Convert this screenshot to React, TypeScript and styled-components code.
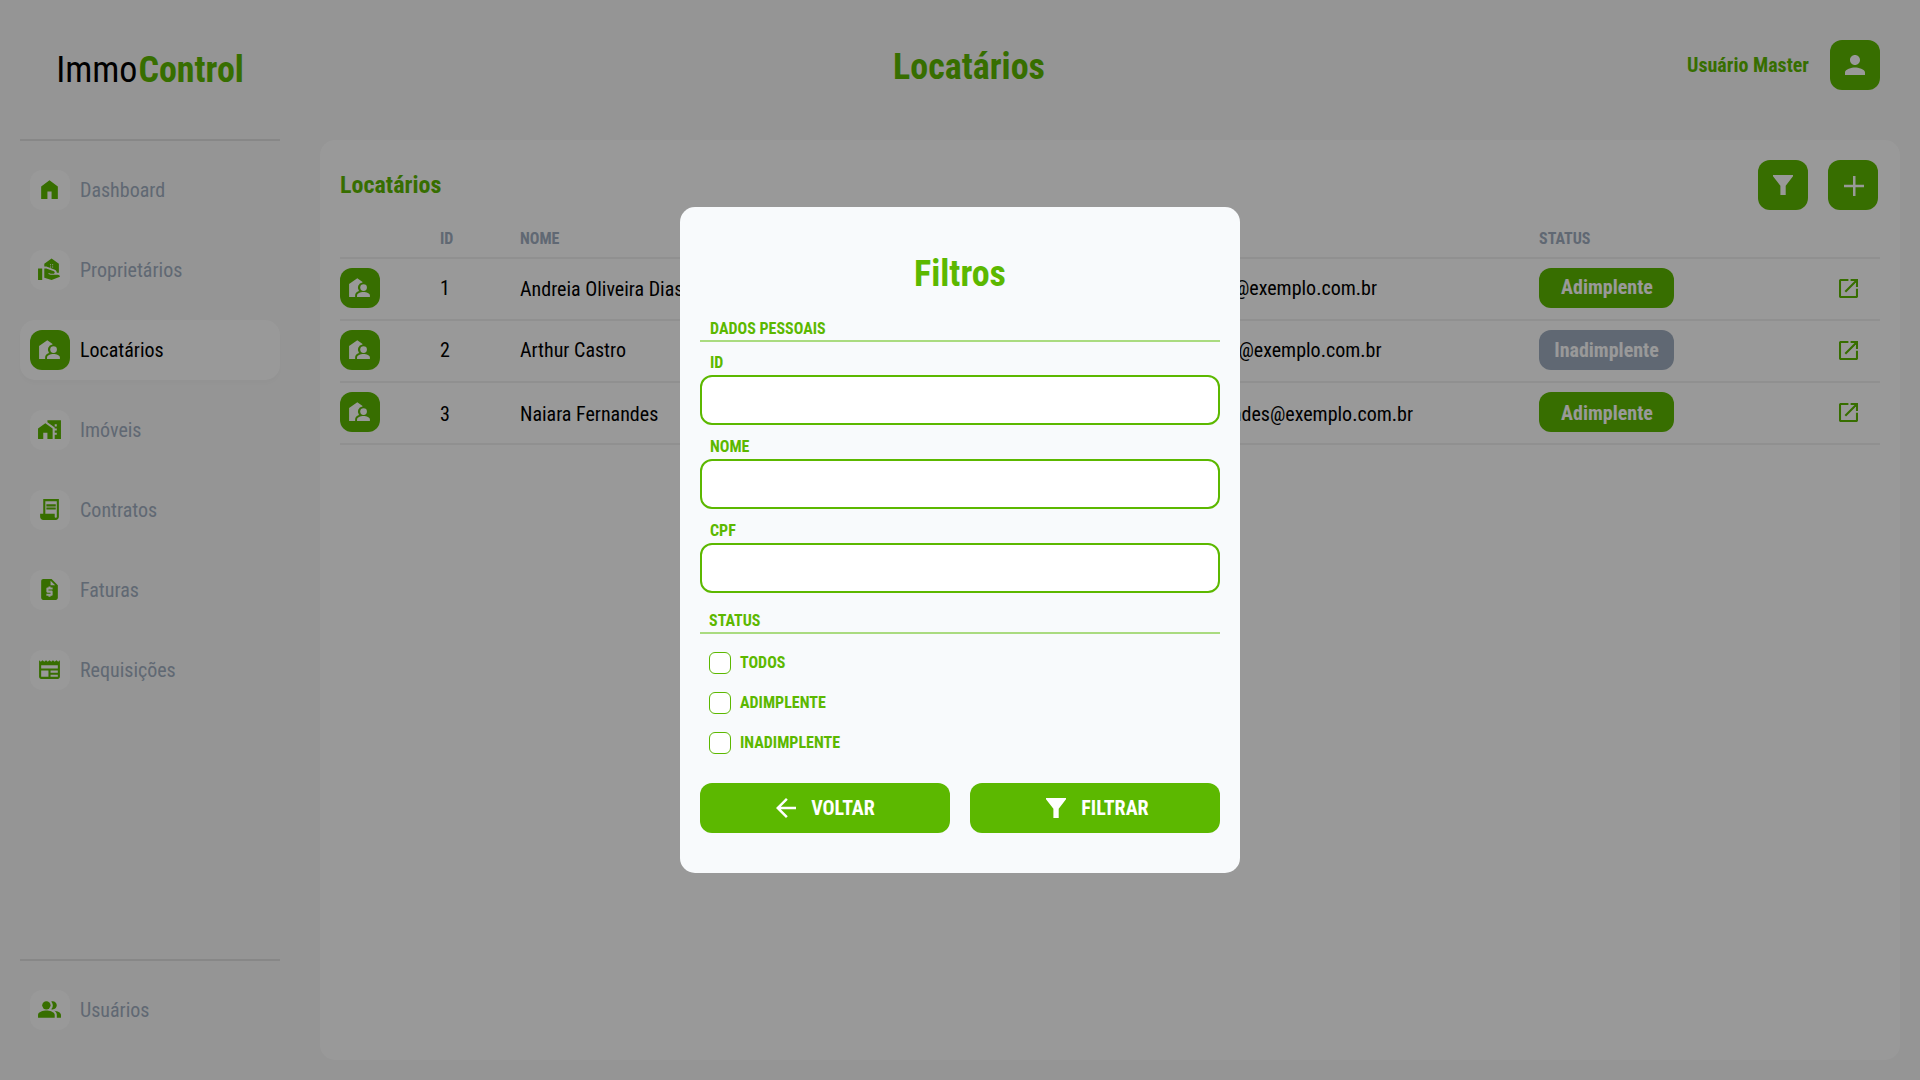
import React from "react";
import styled, { createGlobalStyle } from "styled-components";
import {
  MdRealEstateAgent, MdHomeWork, MdRequestQuote,
  MdNewspaper, MdPeopleAlt, MdPerson, MdArrowBack,
} from "react-icons/md";

const GREEN = "#5cb800";
const GRAY = "#a0aec0";
const WHITE = "#ffffff";

const Global = createGlobalStyle`
  * { box-sizing: border-box; }
  body {
    margin: 0;
    background: #f8f8f8;
    font-family: "Roboto Condensed", Roboto, sans-serif;
    font-stretch: 75%;
    color: #000;
  }
  button, input { font: inherit; font-stretch: 75%; }
`;

const Page = styled.div`
  display: flex;
  width: 1920px;
  height: 1080px;
  overflow: hidden;
`;

const Sidebar = styled.aside`
  width: 300px;
  padding: 0 20px;
  display: flex;
  flex-direction: column;
`;

const Logo = styled.div`
  height: 139px;
  padding-top: 49px;
  line-height: 42px;
  font-size: 36px;
  text-align: center;
  b { margin-left: 1px; color: ${GREEN}; font-weight: 700; }
`;

const Rule = styled.div`
  height: 2px;
  background: #e2e2e2;
`;

const Nav = styled.nav`
  flex: 1;
  display: flex;
  flex-direction: column;
  gap: 20px;
  padding-top: 19px;
`;

const NavItem = styled.a<{ $active?: boolean }>`
  display: flex;
  align-items: center;
  height: 60px;
  padding: 0 10px;
  gap: 10px;
  border-radius: 15px;
  font-size: 20px;
  line-height: 24px;
  color: ${(p) => (p.$active ? "#000" : GRAY)};
  background: ${(p) => (p.$active ? WHITE : "transparent")};
  box-shadow: ${(p) => (p.$active ? "0 3.5px 5.5px rgba(0, 0, 0, 0.012)" : "none")};
`;

const Tile = styled.span<{ $solid?: boolean }>`
  display: flex;
  align-items: center;
  justify-content: center;
  width: 40px;
  height: 40px;
  padding: 0 1px 1px 0;
  border-radius: 12px;
  color: ${(p) => (p.$solid ? WHITE : GREEN)};
  background: ${(p) => (p.$solid ? GREEN : WHITE)};
`;

const LargeTile = styled(Tile)`
  width: 50px;
  height: 50px;
  padding: 0;
`;

const SideFooter = styled.div`
  height: 121px;
  display: flex;
  flex-direction: column;
  gap: 19px;
`;

const Main = styled.main`
  flex: 1;
  display: flex;
  flex-direction: column;
  padding: 0 20px 20px 20px;
`;

const Header = styled.header`
  height: 140px;
  display: flex;
  justify-content: space-between;
  padding: 40px 20px 0 573px;
`;

const Title = styled.h1`
  margin: 6px 0 0 0;
  font-size: 36px;
  line-height: 42px;
  color: ${GREEN};
`;

const User = styled.div`
  display: flex;
  gap: 21px;
  height: 50px;
  font-size: 20px;
  font-weight: 700;
  line-height: 50px;
  color: ${GREEN};
`;

const Card = styled.section`
  flex: 1;
  padding: 20px;
  border-radius: 15px;
  background: ${WHITE};
`;

const CardHead = styled.div`
  display: flex;
  align-items: flex-start;
  height: 65px;
  padding-right: 2px;
  gap: 20px;
`;

const CardTitle = styled.h2`
  flex: 1;
  margin: 11px 0 0;
  font-size: 24px;
  line-height: 28px;
  color: ${GREEN};
`;

const Row = styled.div`
  display: grid;
  grid-template-columns: 100px 80px 720px 299px 300px 41px;
  height: 62px;
  border-bottom: 2px solid #f1f1f1;
  font-size: 20px;
  line-height: 24px;
`;

const HeadRow = styled(Row)`
  height: 34px;
  font-size: 16px;
  font-weight: 700;
  line-height: 27px;
  color: ${GRAY};
`;

const IconCell = styled.div`
  padding-top: 9px;
`;

const Cell = styled.div<{ $top: number }>`
  padding-top: ${(p) => p.$top}px;
  white-space: nowrap;
`;

const EmailCell = styled(Cell)<{ $end: number }>`
  display: flex;
  justify-content: flex-end;
  padding-right: ${(p) => p.$end}px;
`;

const Badge = styled.div<{ $ok: boolean; $top: number }>`
  width: 135px;
  height: 40px;
  margin-top: 9px;
  padding-top: ${(p) => p.$top}px;
  padding-left: ${(p) => (p.$ok ? 1 : 0)}px;
  border-radius: 12px;
  text-align: center;
  font-weight: 700;
  color: ${WHITE};
  background: ${(p) => (p.$ok ? GREEN : GRAY)};
`;

const OpenCell = styled.div`
  padding-top: 20px;
  color: ${GREEN};
  svg { display: block; }
`;

const Overlay = styled.div`
  position: fixed;
  inset: 0;
  display: flex;
  align-items: center;
  justify-content: center;
  background: rgba(0, 0, 0, 0.4);
`;

const Modal = styled.div`
  width: 560px;
  height: 666px;
  padding: 40px 20px;
  border-radius: 15px;
  background: #f8fafc;
  color: ${GREEN};
  font-size: 16px;
  font-weight: 700;
`;

const ModalTitle = styled(Title)`
  text-align: center;
`;

const Section = styled.div<{ $top: number; $left: number }>`
  margin-top: ${(p) => p.$top}px;
  padding-left: ${(p) => p.$left}px;
  height: 22px;
  line-height: 18px;
  border-bottom: 2px solid #aadb80;
`;

const Field = styled.label<{ $top: number }>`
  display: block;
  margin-top: ${(p) => p.$top}px;
  line-height: 20px;
  span { display: block; height: 22px; padding-left: 10px; }
`;

const Input = styled.input`
  display: block;
  width: 100%;
  height: 50px;
  padding: 0 16px;
  border: 2px solid ${GREEN};
  border-radius: 12px;
  background: ${WHITE};
  outline: none;
`;

const Checks = styled.div`
  display: flex;
  flex-direction: column;
  gap: 18px;
  padding: 18px 0 0 9px;
`;

const Check = styled.label`
  display: flex;
  gap: 9px;
  height: 22px;
  line-height: 21px;
`;

const Box = styled.span`
  width: 22px;
  height: 22px;
  border: 1px solid ${GREEN};
  border-radius: 6px;
  background: ${WHITE};
`;

const Actions = styled.div`
  display: flex;
  gap: 20px;
  margin-top: 29px;
`;

const Action = styled.button<{ $shift?: number }>`
  flex: none;
  width: 250px;
  display: flex;
  align-items: center;
  justify-content: center;
  gap: 10px;
  height: 50px;
  padding: 0 ${(p) => p.$shift ?? 0}px 0 0;
  border: 0;
  border-radius: 12px;
  background: ${GREEN};
  color: ${WHITE};
  font-size: 20px;
  font-weight: 700;
`;

const HomeIcon = () => (
  <svg width="25" height="25" viewBox="0 0 24 24" fill="currentColor">
    <path d="M4 21V9l8-6 8 6v12h-6v-7h-4v7z" />
  </svg>
);

const TenantIcon = () => (
  <svg width="25" height="25" viewBox="0 0 24 24" fill="currentColor">
    <path d="M9.9 3 2 8.7V21h5.8v-1.3c0-2 1.3-3.4 3.7-4.3a5 5 0 0 1 3.3-8.1l.2-.6z" />
    <circle cx="15.9" cy="12.1" r="3.2" />
    <path d="M9.6 21v-1.2c0-2.2 3.2-3.4 6.2-3.4s6.2 1.2 6.2 3.4V21z" />
  </svg>
);

const ContractIcon = () => (
  <svg width="25" height="25" viewBox="0 0 24 24" fill="currentColor">
    <path d="M6 22q-1.25 0-2.125-.875T3 19v-3h3V2h15v17q0 1.25-.875 2.125T18 22zm12-2q.425 0 .713-.288T19 19V4H8v12h9v3q0 .425.288.713T18 20zM9 9V7h9v2zm0 3v-2h9v2z" />
  </svg>
);

const Funnel = () => (
  <svg width="30" height="30" viewBox="0 0 30 30" fill="currentColor">
    <path d="M5 5h20v1.3L17.7 15.8V25h-5.3v-9.2L5 6.3z" />
  </svg>
);

const Plus = () => (
  <svg width="22" height="22" viewBox="0 0 22 22" fill="currentColor">
    <path d="M11 2h2.5v8.8H22v2.5h-8.5V22H11v-8.7H2v-2.5h9z" />
  </svg>
);

const OpenIcon = () => (
  <svg width="19" height="19" viewBox="0 0 19 19" fill="none" stroke="currentColor" strokeWidth="2.1">
    <path d="M9.4 1H1.8a.8.8 0 0 0-.8.8v15.4c0 .5.4.8.8.8h15.4c.5 0 .8-.3.8-.8V9.8" />
    <path d="M11.6 1H18v7M18 1 6.3 12.7" />
  </svg>
);

const NAV = [
  { label: "Dashboard", icon: <HomeIcon /> },
  { label: "Proprietários", icon: <MdRealEstateAgent size={25} /> },
  { label: "Locatários", icon: <TenantIcon />, active: true },
  { label: "Imóveis", icon: <MdHomeWork size={25} /> },
  { label: "Contratos", icon: <ContractIcon /> },
  { label: "Faturas", icon: <MdRequestQuote size={25} /> },
  { label: "Requisições", icon: <MdNewspaper size={25} /> },
];

const TENANTS = [
  { id: 1, name: "Andreia Oliveira Dias", email: "andreia.dias@exemplo.com.br", ok: true, tops: [17, 18, 17], badge: 7, end: 162 },
  { id: 2, name: "Arthur Castro", email: "arthur.castro@exemplo.com.br", ok: false, tops: [17, 17, 17], badge: 8, end: 157.5 },
  { id: 3, name: "Naiara Fernandes", email: "naiara.fernandes@exemplo.com.br", ok: true, tops: [19, 19, 19], badge: 9, end: 126 },
];

export default function App() {
  return (
    <>
      <Global />
      <Page>
        <Sidebar>
          <Logo>Immo<b>Control</b></Logo>
          <Rule />
          <Nav>
            {NAV.map((n) => (
              <NavItem key={n.label} $active={n.active}>
                <Tile $solid={n.active}>{n.icon}</Tile>
                {n.label}
              </NavItem>
            ))}
          </Nav>
          <SideFooter>
            <Rule />
            <NavItem>
              <Tile><MdPeopleAlt size={25} /></Tile>
              Usuários
            </NavItem>
          </SideFooter>
        </Sidebar>
        <Main>
          <Header>
            <Title>Locatários</Title>
            <User>
              Usuário Master
              <LargeTile $solid><MdPerson size={30} /></LargeTile>
            </User>
          </Header>
          <Card>
            <CardHead>
              <CardTitle>Locatários</CardTitle>
              <LargeTile $solid><Funnel /></LargeTile>
              <LargeTile $solid><Plus /></LargeTile>
            </CardHead>
            <HeadRow>
              <span />
              <span>ID</span>
              <span>NOME</span>
              <span />
              <span>STATUS</span>
            </HeadRow>
            {TENANTS.map((t) => (
              <Row key={t.id}>
                <IconCell><Tile $solid><TenantIcon /></Tile></IconCell>
                <Cell $top={t.tops[0]}>{t.id}</Cell>
                <Cell $top={t.tops[1]}>{t.name}</Cell>
                <EmailCell $top={t.tops[2]} $end={t.end}>{t.email}</EmailCell>
                <Badge $ok={t.ok} $top={t.badge}>{t.ok ? "Adimplente" : "Inadimplente"}</Badge>
                <OpenCell><OpenIcon /></OpenCell>
              </Row>
            ))}
          </Card>
        </Main>
      </Page>
      <Overlay>
        <Modal>
          <ModalTitle>Filtros</ModalTitle>
          <Section $top={25} $left={10}>DADOS PESSOAIS</Section>
          <Field $top={11}><span>ID</span><Input /></Field>
          <Field $top={12}><span>NOME</span><Input /></Field>
          <Field $top={12}><span>CPF</span><Input /></Field>
          <Section $top={19} $left={9}>STATUS</Section>
          <Checks>
            {["TODOS", "ADIMPLENTE", "INADIMPLENTE"].map((c) => (
              <Check key={c}><Box />{c}</Check>
            ))}
          </Checks>
          <Actions>
            <Action $shift={4}><MdArrowBack size={30} />VOLTAR</Action>
            <Action><Funnel />FILTRAR</Action>
          </Actions>
        </Modal>
      </Overlay>
    </>
  );
}
